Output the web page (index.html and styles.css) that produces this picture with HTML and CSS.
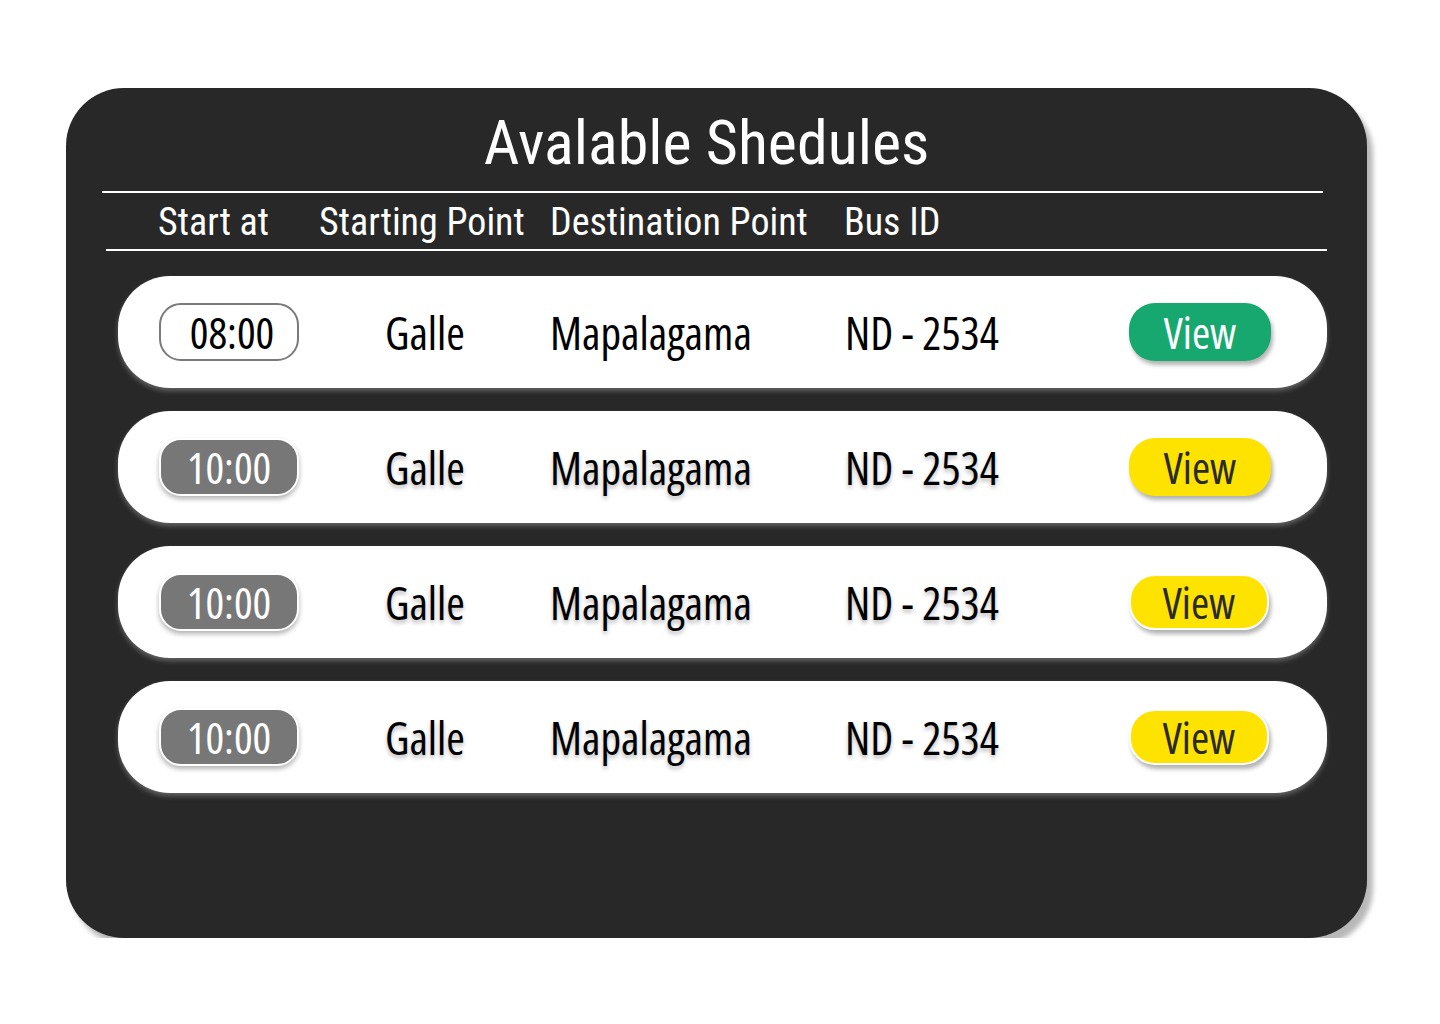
FILE: index.html
```html
<!DOCTYPE html>
<html lang="en">
<head>
<meta charset="utf-8">
<title>Avalable Shedules</title>
<link rel="stylesheet" href="styles.css">
</head>
<body>
<main class="card">
  <h1 class="title">Avalable Shedules</h1>
  <hr class="rule rule-top">
  <div class="head">
    <span>Start at</span>
    <span>Starting Point</span>
    <span>Destination Point</span>
    <span>Bus ID</span>
  </div>
  <hr class="rule rule-bottom">
  <ul class="rows">
    <li class="row">
      <span class="time time-active">08:00</span>
      <span class="cell">Galle</span>
      <span class="cell">Mapalagama</span>
      <span class="cell">ND - 2534</span>
      <button class="view view-green">View</button>
    </li>
    <li class="row row-shadow">
      <span class="time">10:00</span>
      <span class="cell">Galle</span>
      <span class="cell">Mapalagama</span>
      <span class="cell">ND - 2534</span>
      <button class="view view-yellow">View</button>
    </li>
    <li class="row row-shadow">
      <span class="time">10:00</span>
      <span class="cell">Galle</span>
      <span class="cell">Mapalagama</span>
      <span class="cell">ND - 2534</span>
      <button class="view view-yellow view-outline">View</button>
    </li>
    <li class="row row-shadow">
      <span class="time">10:00</span>
      <span class="cell">Galle</span>
      <span class="cell">Mapalagama</span>
      <span class="cell">ND - 2534</span>
      <button class="view view-yellow view-outline">View</button>
    </li>
  </ul>
</main>
</body>
</html>
```
FILE: styles.css
```css
* { box-sizing: border-box; }

body {
  margin: 0;
  background: #ffffff;
  font-family: "Open Sans", "Roboto", sans-serif;
  font-stretch: 75%;
}

.card {
  margin: 88px 0 0 66px;
  width: 1301px;
  height: 850px;
  background: #282828;
  border-radius: 58px;
  box-shadow: 6px 8px 5px rgba(0, 0, 0, 0.28);
  padding-top: 23px;
}

.title {
  margin: 0;
  font-family: "Roboto", "Open Sans", sans-serif;
  font-size: 62px;
  line-height: 64px;
  font-weight: 400;
  color: #ffffff;
  text-align: center;
  padding-right: 20px;
}

.rule {
  border: 0;
  height: 2px;
  background: #ffffff;
  width: 1221px;
  margin: 0;
}

.rule-top {
  margin: 16px 0 0 36px;
}

.rule-bottom {
  margin: 8px 0 0 40px;
}

.head {
  display: grid;
  grid-template-columns: 161px 231px 294px auto;
  margin: 10px 0 0 92px;
  font-family: "Roboto", "Open Sans", sans-serif;
  font-size: 38px;
  line-height: 38px;
  color: #ffffff;
}

.rows {
  list-style: none;
  margin: 25px 0 0 52px;
  padding: 0;
  width: 1209px;
  display: flex;
  flex-direction: column;
  gap: 23px;
}

.row {
  height: 112px;
  background: #ffffff;
  border-radius: 52px;
  display: grid;
  grid-template-columns: 226px 165px 295px 1fr 142px;
  align-items: center;
  padding: 0 56px 0 41px;
  box-shadow: 0 3px 5px rgba(170, 170, 170, 0.45);
  font-size: 45px;
  line-height: 1;
  color: #000000;
}

.row-shadow .cell {
  text-shadow: 0 3px 4px rgba(0, 0, 0, 0.28);
}

.time {
  width: 140px;
  height: 58px;
  border-radius: 22px;
  display: flex;
  align-items: center;
  justify-content: center;
  background: #777777;
  color: #ffffff;
  border: 2px solid #ffffff;
  box-shadow: 0 3px 5px rgba(0, 0, 0, 0.3);
  font-size: 44px;
}

.time-active {
  background: #ffffff;
  color: #000000;
  border: 2px solid #7a7a7a;
  box-shadow: none;
  padding-left: 6px;
}

.view {
  width: 142px;
  height: 58px;
  border-radius: 26px;
  border: 0;
  font-family: inherit;
  font-stretch: 75%;
  font-size: 44px;
  line-height: 1;
  display: flex;
  align-items: center;
  justify-content: center;
  box-shadow: 2px 4px 4px rgba(0, 0, 0, 0.3);
  padding: 0;
}

.view-green {
  background: #17a86f;
  color: #ffffff;
}

.view-yellow {
  background: #ffe300;
  color: #2a2a2a;
}

.view-outline {
  border: 2px solid #ffffff;
  width: 140px;
  height: 56px;
}
```
